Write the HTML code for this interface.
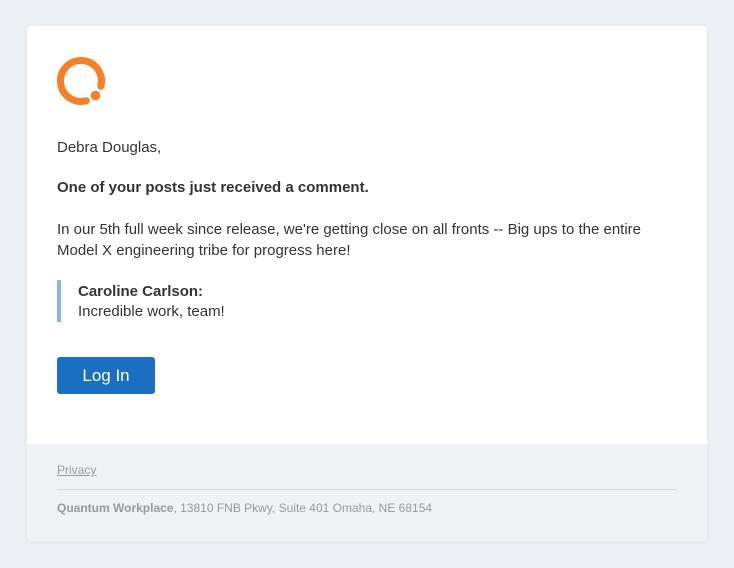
<!DOCTYPE html>
<html><head><meta charset="utf-8"><style>
html,body{margin:0;padding:0}
body{width:734px;height:568px;background:#eceff3;font-family:"Liberation Sans",Arial,sans-serif;position:relative;overflow:hidden}
.card{position:absolute;left:27px;top:26px;width:680px;height:515px;background:#fff;border-radius:4px;box-shadow:0 1px 4px rgba(0,0,0,.06);overflow:hidden}
.foot{position:absolute;left:0;top:418px;width:680px;height:97px;background:#eff1f4}
p{margin:0;position:absolute;left:30px;font-size:15px;color:#333;line-height:21px}
</style></head><body>
<div class="card">
<svg style="position:absolute;left:0;top:0" width="120" height="100" viewBox="27 26 120 100">
<path d="M100.8 86.3 A20.5 20.5 0 1 0 86.3 100.8" fill="none" stroke="#f58025" stroke-width="7" stroke-linecap="round"/>
<circle cx="95.5" cy="95.5" r="4.8" fill="#f58025"/>
</svg>
<p style="top:111px">Debra Douglas,</p>
<p style="top:151px;font-weight:bold">One of your posts just received a comment.</p>
<p style="top:193px;width:600px">In our 5th full week since release, we're getting close on all fronts -- Big ups to the entire Model X engineering tribe for progress here!</p>
<div style="position:absolute;left:30px;top:254px;width:4px;height:42px;background:#8bb6e1"></div>
<p style="top:255px;left:51px;font-weight:bold">Caroline Carlson:</p>
<p style="top:275px;left:51px">Incredible work, team!</p>
<div style="position:absolute;left:30px;top:331px;width:98px;height:37px;background:#1b6fc3;border-radius:3px;color:#fff;font-size:17px;line-height:37px;text-align:center">Log In</div>
<div class="foot">
<div style="position:absolute;left:30px;top:19px;font-size:12px;color:#999;text-decoration:underline">Privacy</div>
<div style="position:absolute;left:30px;top:45px;width:620px;height:1px;background:#d6d8dc"></div>
<div style="position:absolute;left:30px;top:57px;font-size:12px;color:#999"><b>Quantum Workplace</b>, 13810 FNB Pkwy, Suite 401 Omaha, NE 68154</div>
</div>
</div>
</body></html>
